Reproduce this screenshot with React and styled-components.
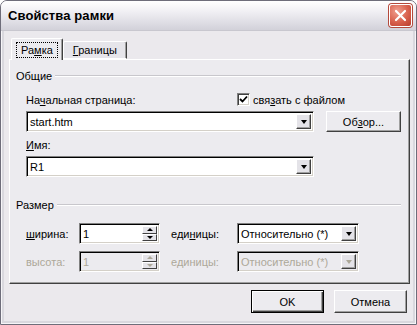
import styled, { createGlobalStyle } from "styled-components";

const Global = createGlobalStyle`
  html, body { margin: 0; padding: 0; background: #ffffff; }
  body { font-family: "Liberation Sans", Arial, sans-serif; font-size: 11px; color: #000; }
  u { text-decoration: underline; text-underline-offset: 1px; }
`;

const Window = styled.div`
  width: 417px;
  height: 325px;
  box-sizing: border-box;
  background: #ebe9ed;
  border: 1px solid #6e6d7a;
  border-radius: 7px 7px 0 0;
  box-shadow: inset 0 0 0 1px #f6f5f8, inset 0 0 0 3px #d9d8de;
  display: flex;
  flex-direction: column;
  overflow: hidden;
`;

const TitleBar = styled.div`
  height: 29px;
  flex: none;
  display: flex;
  align-items: center;
  justify-content: space-between;
  padding: 0 4px 0 7px;
  background: linear-gradient(#ffffff 0%, #f1f0f4 35%, #dedde4 75%, #d2d1d9 100%);
  border-bottom: 1px solid #c8c7cf;
`;

const Title = styled.div`
  font-family: "Liberation Sans", Arial, sans-serif;
  font-weight: bold;
  font-size: 13px;
  letter-spacing: 0.1px;
`;

const CloseButton = styled.div`
  width: 21px;
  height: 21px;
  border-radius: 3px;
  border: 1px solid #ffffff;
  background: radial-gradient(circle at 35% 30%, #f0a090, #d8604c 55%, #b83c2c);
  box-shadow: 0 0 0 1px #b44a3c;
  display: flex;
  align-items: center;
  justify-content: center;
`;

const Body = styled.div`
  flex: 1;
  display: flex;
  flex-direction: column;
  padding: 7px 4px 0 8px;
`;

const TabRow = styled.div`
  display: flex;
  align-items: flex-end;
  height: 21px;
  padding-left: 2px;
  position: relative;
  z-index: 1;
`;

const Tab = styled.div`
  box-sizing: border-box;
  height: ${(p) => (p.$active ? "22px" : "18px")};
  margin-bottom: ${(p) => (p.$active ? "-1px" : "0")};
  padding: 0 6px;
  display: flex;
  align-items: center;
  background: ${(p) => (p.$active ? "#ecebef" : "#e6e5ea")};
  border: 1px solid #ffffff;
  border-right: 1px solid #404040;
  border-bottom: ${(p) => (p.$active ? "none" : "1px solid #ffffff")};
  box-shadow: inset -1px 0 0 #a0a0a0;
  border-radius: 2px 2px 0 0;
`;

const FocusText = styled.span`
  outline: 1px dotted #000;
  outline-offset: 1px;
  padding: 0 3px;
`;

const TabLabel = styled.span`
  padding: 0 3px;
`;

const Panel = styled.div`
  box-sizing: border-box;
  height: 225px;
  width: 401px;
  background: #ecebef;
  border: 1px solid #ffffff;
  border-right-color: #404040;
  border-bottom-color: #404040;
  box-shadow: inset -1px -1px 0 #a0a0a0;
  padding: 0 8px 0 6px;
  display: flex;
  flex-direction: column;
`;

const GroupHeader = styled.div`
  display: flex;
  align-items: center;
  gap: 3px;
  height: 13px;
  margin-top: ${(p) => p.$top}px;
  &::after {
    content: "";
    flex: 1;
    height: 0;
    border-top: 1px solid #c8c7cc;
    border-bottom: 1px solid #ffffff;
  }
`;

const Field = styled.div`
  padding-left: 10px;
  display: flex;
  flex-direction: column;
`;

const LabelRow = styled.div`
  display: flex;
  align-items: center;
  height: 13px;
  margin-top: ${(p) => p.$top}px;
`;

const Check = styled.div`
  margin-left: auto;
  margin-right: 56px;
  display: flex;
  align-items: center;
  gap: 3px;
`;

const CheckBox = styled.div`
  width: 13px;
  height: 13px;
  box-sizing: border-box;
  background: #fff;
  border: 1px solid #808080;
  border-right-color: #fff;
  border-bottom-color: #fff;
  box-shadow: inset 1px 1px 0 #404040, inset -1px -1px 0 #d4d0c8;
  display: flex;
  align-items: center;
  justify-content: center;
`;

const InputRow = styled.div`
  display: flex;
  align-items: center;
  margin-top: ${(p) => p.$top}px;
  gap: ${(p) => p.$gap || 0}px;
`;

const Sunken = styled.div`
  box-sizing: border-box;
  width: ${(p) => p.$w}px;
  height: 21px;
  display: flex;
  align-items: stretch;
  background: ${(p) => (p.$disabled ? "#ecebef" : "#ffffff")};
  border: 1px solid #808080;
  border-right-color: #ffffff;
  border-bottom-color: #ffffff;
  box-shadow: inset 1px 1px 0 #000, inset -1px -1px 0 #d4d0c8;
  padding: 2px;
`;

const Value = styled.div`
  flex: 1;
  display: flex;
  align-items: center;
  padding-left: 1px;
  color: ${(p) => (p.$disabled ? "#aca899" : "#000")};
  white-space: nowrap;
`;

const ArrowButton = styled.div`
  width: 15px;
  flex: none;
  box-sizing: border-box;
  background: #e4e3e8;
  border: 1px solid #ffffff;
  border-right-color: #404040;
  border-bottom-color: #404040;
  box-shadow: inset -1px -1px 0 #a0a0a0;
  display: flex;
  align-items: center;
  justify-content: center;
  &::after {
    content: "";
    border-left: 3.5px solid transparent;
    border-right: 3.5px solid transparent;
    border-top: 4px solid ${(p) => (p.$disabled ? "#aca899" : "#000")};
    margin-top: 1px;
  }
`;

const SpinCol = styled.div`
  width: 15px;
  flex: none;
  display: flex;
  flex-direction: column;
`;

const SpinHalf = styled.div`
  flex: 1;
  box-sizing: border-box;
  background: #e4e3e8;
  border: 1px solid #ffffff;
  border-right-color: #404040;
  border-bottom-color: #404040;
  display: flex;
  align-items: center;
  justify-content: center;
  &::after {
    content: "";
    border-left: 3px solid transparent;
    border-right: 3px solid transparent;
    ${(p) => (p.$up ? "border-bottom" : "border-top")}: 3px solid
      ${(p) => (p.$disabled ? "#aca899" : "#000")};
  }
`;

const Button = styled.div`
  box-sizing: border-box;
  width: ${(p) => p.$w}px;
  height: ${(p) => p.$h}px;
  display: flex;
  align-items: center;
  justify-content: center;
  background: #ecebef;
  border: 1px solid ${(p) => (p.$default ? "#000" : "#ffffff")};
  ${(p) =>
    p.$default
      ? "box-shadow: inset 1px 1px 0 #fff, inset -1px -1px 0 #404040, inset -2px -2px 0 #a0a0a0;"
      : "border-right-color: #404040; border-bottom-color: #404040; box-shadow: inset -1px -1px 0 #a0a0a0;"}
`;

const SizeLabel = styled.div`
  width: ${(p) => p.$w}px;
  flex: none;
  margin-left: ${(p) => p.$left || 0}px;
  color: ${(p) => (p.$disabled ? "#aca899" : "#000")};
`;

const Footer = styled.div`
  display: flex;
  justify-content: flex-end;
  gap: 10px;
  margin-top: 6px;
  padding-right: 5px;
`;

const Combo = ({ w, value, disabled }) => (
  <Sunken $w={w} $disabled={disabled}>
    <Value $disabled={disabled}>{value}</Value>
    <ArrowButton $disabled={disabled} />
  </Sunken>
);

const Spin = ({ value, disabled }) => (
  <Sunken $w={81} $disabled={disabled}>
    <Value $disabled={disabled}>{value}</Value>
    <SpinCol>
      <SpinHalf $up $disabled={disabled} />
      <SpinHalf $disabled={disabled} />
    </SpinCol>
  </Sunken>
);

const SizeRow = ({ top, label, unit, disabled }) => (
  <InputRow $top={top}>
    <SizeLabel $w={53} $disabled={disabled}>{label}</SizeLabel>
    <Spin value="1" disabled={disabled} />
    <SizeLabel $w={66} $left={11} $disabled={disabled}>
      {unit}
    </SizeLabel>
    <Combo w={122} value="Относительно (*)" disabled={disabled} />
  </InputRow>
);

const App = () => {
  return (
    <>
      <Global />
      <Window>
        <TitleBar>
          <Title>Свойства рамки</Title>
          <CloseButton>
            <svg width="13" height="13" viewBox="0 0 13 13">
              <path d="M2 2 L11 11 M11 2 L2 11" stroke="#fff" strokeWidth="2.2" strokeLinecap="round" />
            </svg>
          </CloseButton>
        </TitleBar>
        <Body>
          <TabRow>
            <Tab $active>
              <FocusText>
                Ра<u>м</u>ка
              </FocusText>
            </Tab>
            <Tab>
              <TabLabel>
                <u>Г</u>раницы
              </TabLabel>
            </Tab>
          </TabRow>
          <Panel>
            <GroupHeader $top={9}>Общие</GroupHeader>
            <Field>
              <LabelRow $top={11}>
                <span>
                  На<u>ч</u>альная страница:
                </span>
                <Check>
                  <CheckBox>
                    <svg width="9" height="9" viewBox="0 0 9 9">
                      <path d="M1 4 L3.5 6.5 L8 1.5" stroke="#000" strokeWidth="1.8" fill="none" />
                    </svg>
                  </CheckBox>
                  <span>
                    свя<u>з</u>ать с файлом
                  </span>
                </Check>
              </LabelRow>
              <InputRow $top={5} $gap={12}>
                <Combo w={288} value="start.htm" />
                <Button $w={75} $h={21}>
                  Об<u>з</u>ор...
                </Button>
              </InputRow>
              <LabelRow $top={6}>
                <span>
                  <u>И</u>мя:
                </span>
              </LabelRow>
              <InputRow $top={5}>
                <Combo w={288} value="R1" />
              </InputRow>
            </Field>
            <GroupHeader $top={21}>Размер</GroupHeader>
            <Field>
              <SizeRow
                top={12}
                label={
                  <>
                    <u>ш</u>ирина:
                  </>
                }
                unit={
                  <>
                    еди<u>н</u>ицы:
                  </>
                }
              />
              <SizeRow top={7} label="высота:" unit="единицы:" disabled />
            </Field>
          </Panel>
          <Footer>
            <Button $w={73} $h={23} $default>
              OK
            </Button>
            <Button $w={73} $h={23}>
              Отмена
            </Button>
          </Footer>
        </Body>
      </Window>
    </>
  );
};

export default App;
